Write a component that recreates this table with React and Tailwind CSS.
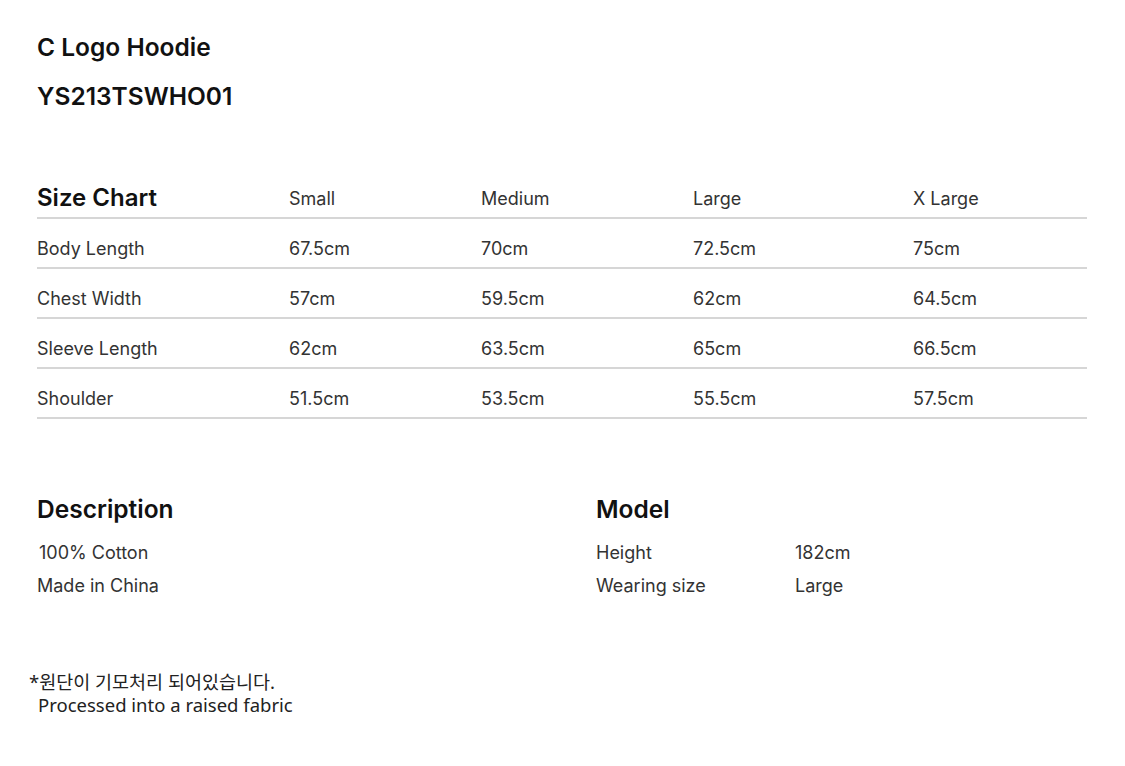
const sizes = ['Small', 'Medium', 'Large', 'X Large']

const rows = [
  ['Body Length', '67.5cm', '70cm', '72.5cm', '75cm'],
  ['Chest Width', '57cm', '59.5cm', '62cm', '64.5cm'],
  ['Sleeve Length', '62cm', '63.5cm', '65cm', '66.5cm'],
  ['Shoulder', '51.5cm', '53.5cm', '55.5cm', '57.5cm'],
]

const cols = 'grid grid-cols-[252px_192px_212px_220px_1fr]'

export default function App() {
  return (
    <div className="w-[1125px] h-[766px] bg-white text-[#222] font-['Inter',sans-serif] px-[37px] pt-[32px]">
      {/* product header */}
      <h1 className="text-[24.5px] font-semibold leading-[30px] text-[#111]">C Logo Hoodie</h1>
      <h2 className="text-[24.5px] font-semibold leading-[30px] text-[#111] mt-[19px]">YS213TSWHO01</h2>

      {/* size chart */}
      <div className="mt-[64px] w-[1050px]">
        <div className={`${cols} items-center h-[44px] border-b-2 border-[#d6d6d6]`}>
          <div className="text-[24px] font-semibold text-[#111] pt-[4px]">Size Chart</div>
          {sizes.map((s) => (
            <div key={s} className="text-[18px] text-[#333] pt-[4px]">{s}</div>
          ))}
        </div>
        {rows.map((r) => (
          <div key={r[0]} className={`${cols} items-start h-[50px] border-b-2 border-[#d6d6d6]`}>
            {r.map((c, i) => (
              <div key={i} className="text-[18px] leading-[22px] text-[#333] pt-[19px]">{c}</div>
            ))}
          </div>
        ))}
      </div>

      {/* description / model */}
      <div className="flex mt-[74px]">
        <div className="w-[559px]">
          <h3 className="text-[24.5px] font-semibold leading-[32px] text-[#111]">Description</h3>
          <div className="mt-[11px] text-[18px] leading-[33px] text-[#333]">
            <p className="pl-[2px]">100% Cotton</p>
            <p>Made in China</p>
          </div>
        </div>
        <div>
          <h3 className="text-[24.5px] font-semibold leading-[32px] text-[#111]">Model</h3>
          <div className="mt-[11px] text-[18px] leading-[33px] text-[#333]">
            <div className="flex"><span className="w-[199px]">Height</span><span>182cm</span></div>
            <div className="flex"><span className="w-[199px]">Wearing size</span><span>Large</span></div>
          </div>
        </div>
      </div>

      {/* footnote */}
      <div className="mt-[68px] -ml-[8px] font-['Noto_Sans','Noto_Sans_CJK_KR',sans-serif] text-[18.5px] leading-[23px] text-[#222]">
        <p>*원단이 기모처리 되어있습니다.</p>
        <p className="pl-[9px]">Processed into a raised fabric</p>
      </div>
    </div>
  )
}
